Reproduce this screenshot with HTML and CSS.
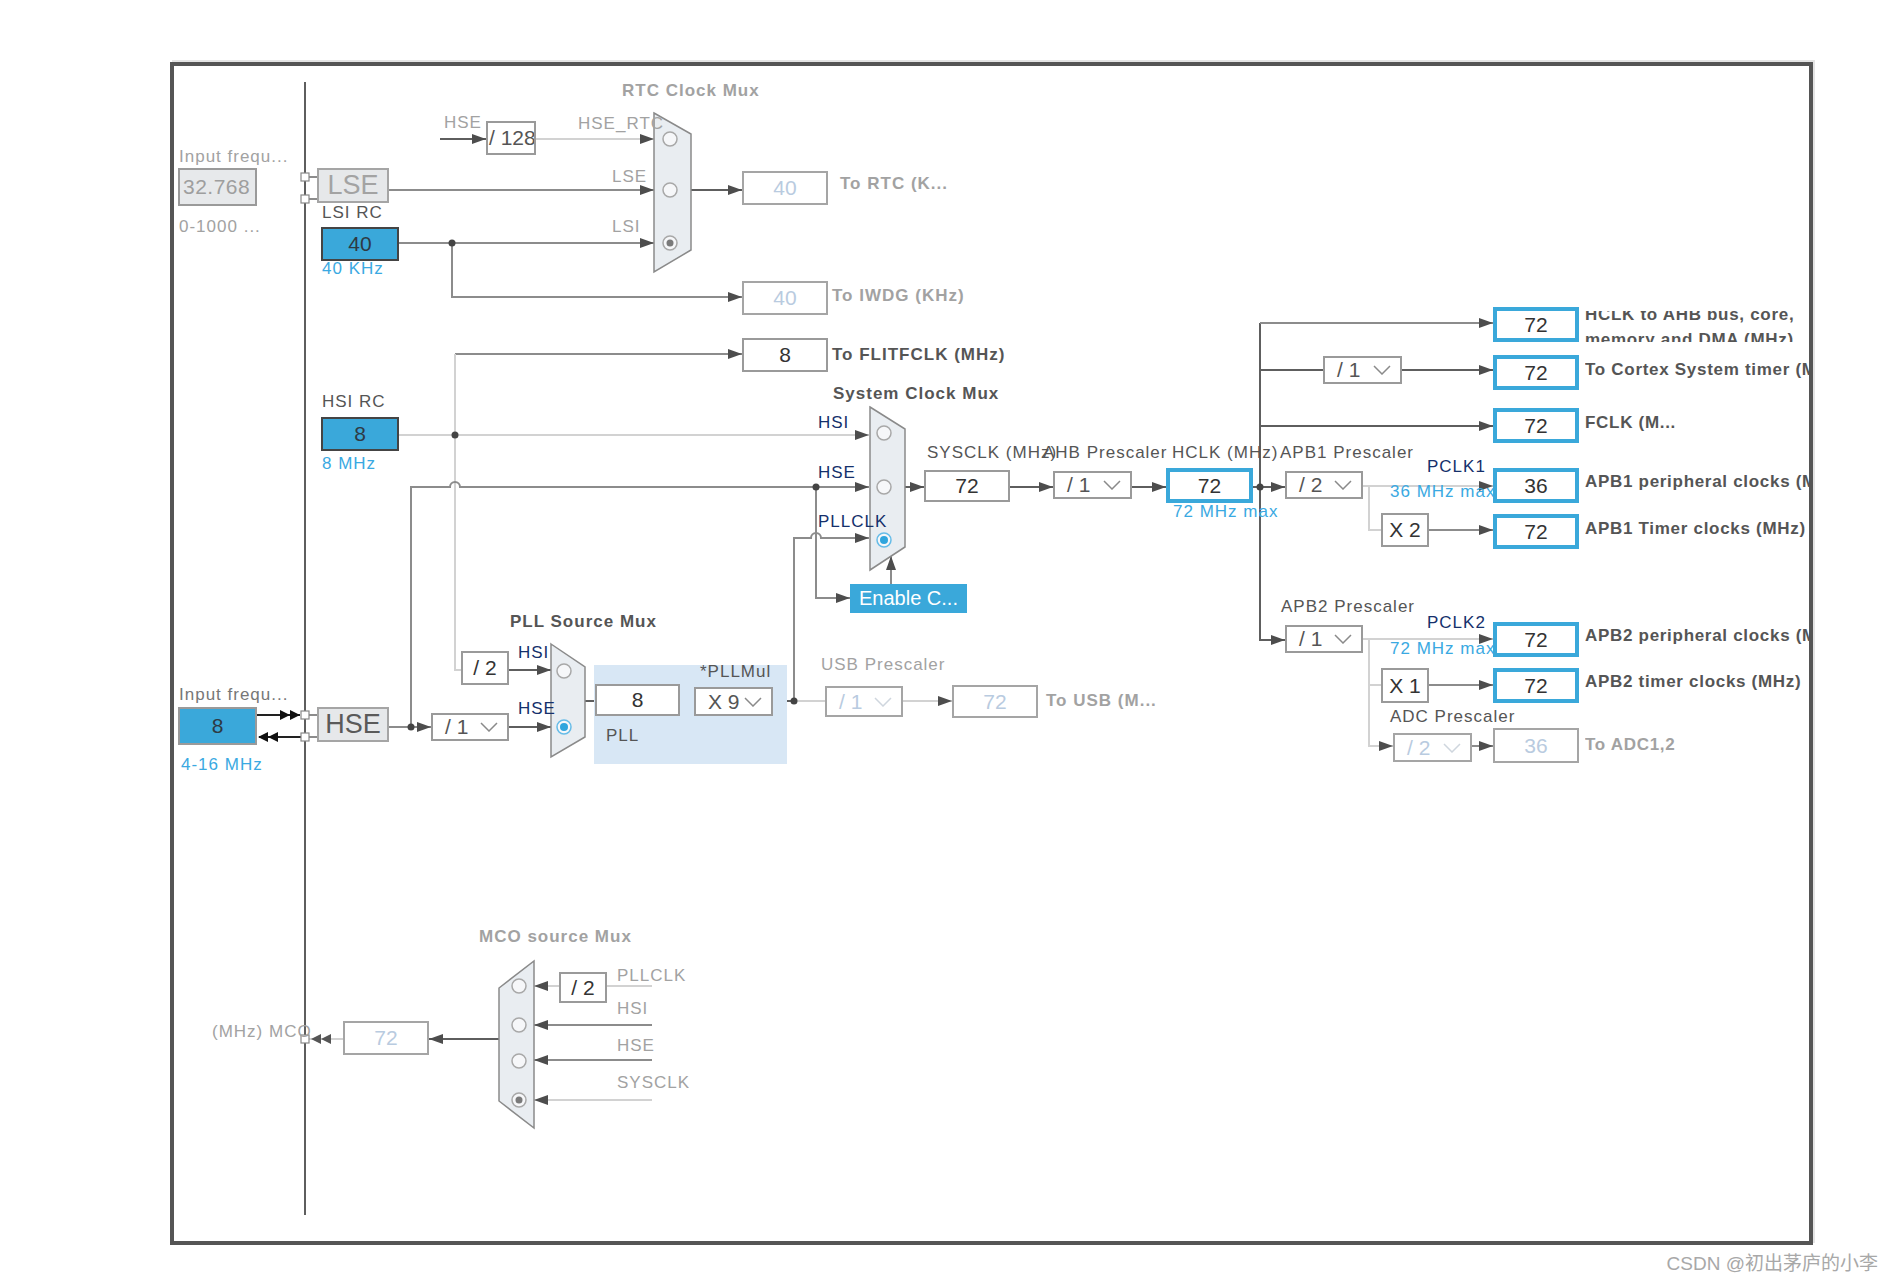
FILE: index.html
```html
<!DOCTYPE html>
<html>
<head>
<meta charset="utf-8">
<link rel="stylesheet" href="styles.css">
</head>
<body>
<div class="frame">
<svg class="wires" width="1643" height="1183" viewBox="170 62 1643 1183">
  <defs>
    <marker id="ar" viewBox="0 0 14 10" markerWidth="14" markerHeight="10" refX="14" refY="5" orient="auto" markerUnits="userSpaceOnUse">
      <path d="M0,0 L14,5 L0,10 z" fill="#4d4d4d"/>
    </marker>
  </defs>
  <!-- bus -->
  <path class="w wd" d="M305,82V1215"/>
  <!-- RTC area -->
  <path class="w wd" d="M440,139H486" marker-end="url(#ar)"/>
  <path class="w wl" d="M536,139H654" marker-end="url(#ar)"/>
  <path class="w wm" d="M389,190H654" marker-end="url(#ar)"/>
  <path class="w wm" d="M399,243H654" marker-end="url(#ar)"/>
  <path class="w wm" d="M452,243V297H742" marker-end="url(#ar)"/>
  <path class="w wd" d="M691,190H742" marker-end="url(#ar)"/>
  <!-- FLITF / HSI -->
  <path class="w wm" d="M455,354H742" marker-end="url(#ar)"/>
  <path class="w wl" d="M455,354V670H461"/>
  <path class="w wl" d="M399,435H869" marker-end="url(#ar)"/>
  <!-- HSE -->
  <path class="w wm" d="M389,727H431" marker-end="url(#ar)"/>
  <path class="w wm" d="M411,727V487H450A5,5 0 0 1 460,487H869" marker-end="url(#ar)"/>
  <path class="w wd" d="M509,670H551" marker-end="url(#ar)"/>
  <path class="w wd" d="M509,727H551" marker-end="url(#ar)"/>
  <!-- PLL -->
  <path class="w wd" d="M585,701H595"/>
  <path class="w wd" d="M680,701H694"/>
  <path class="w wd" d="M773,701H794"/>
  <path class="w wl" d="M794,701H825"/>
  <path class="w wm" d="M794,701V538H811A5,5 0 0 1 821,538H869" marker-end="url(#ar)"/>
  <path class="w wm" d="M816,487V598H850" marker-end="url(#ar)"/>
  <path class="w wm" d="M891,584V556" marker-end="url(#ar)"/>
  <path class="w wl" d="M903,701H952" marker-end="url(#ar)"/>
  <!-- SYSCLK / AHB -->
  <path class="w wd" d="M905,487H924" marker-end="url(#ar)"/>
  <path class="w wd" d="M1010,487H1053" marker-end="url(#ar)"/>
  <path class="w wd" d="M1132,487H1166" marker-end="url(#ar)"/>
  <path class="w wd" d="M1253,487H1285" marker-end="url(#ar)"/>
  <path class="w wd" d="M1260,323V640H1285" marker-end="url(#ar)"/>
  <path class="w wm" d="M1260,323H1493" marker-end="url(#ar)"/>
  <path class="w wd" d="M1260,370H1323"/>
  <path class="w wd" d="M1402,370H1493" marker-end="url(#ar)"/>
  <path class="w wd" d="M1260,426H1493" marker-end="url(#ar)"/>
  <!-- APB1 -->
  <path class="w wl" d="M1363,486H1493" marker-end="url(#ar)"/>
  <path class="w wl" d="M1369,486V530H1381"/>
  <path class="w wm" d="M1429,530H1493" marker-end="url(#ar)"/>
  <!-- APB2 -->
  <path class="w wl" d="M1363,639H1493" marker-end="url(#ar)"/>
  <path class="w wl" d="M1369,639V746H1393" marker-end="url(#ar)"/>
  <path class="w wl" d="M1369,685H1381"/>
  <path class="w wm" d="M1429,685H1493" marker-end="url(#ar)"/>
  <path class="w wm" d="M1472,746H1493" marker-end="url(#ar)"/>
  <!-- MCO -->
  <path class="w wl" d="M652,986H607"/>
  <path class="w wl" d="M559,986H534" marker-end="url(#ar)"/>
  <path class="w wm" d="M652,1025H534" marker-end="url(#ar)"/>
  <path class="w wm" d="M652,1060H534" marker-end="url(#ar)"/>
  <path class="w wl" d="M652,1100H534" marker-end="url(#ar)"/>
  <path class="w wd" d="M499,1039H429" marker-end="url(#ar)"/>
  <path class="w wl" d="M343,1039H309"/>
  <polygon class="head" points="311,1039 321,1034 321,1044"/>
  <polygon class="head" points="321,1039 331,1034 331,1044"/>
  <!-- HSE input arrows -->
  <path class="w wblack" d="M257,715H300"/>
  <polygon class="headk" points="280,710 290,715 280,720"/>
  <polygon class="headk" points="290,710 300,715 290,720"/>
  <path class="w wblack" d="M259,737H301"/>
  <polygon class="headk" points="258,737 268,732 268,742"/>
  <polygon class="headk" points="268,737 278,732 278,742"/>
  <!-- connectors -->
  <path class="w wm" d="M309,177H317M309,199H317M309,715H317M309,737H317"/>
  <rect class="con" x="301" y="173" width="8" height="8"/>
  <rect class="con" x="301" y="195" width="8" height="8"/>
  <rect class="con" x="301" y="711" width="8" height="8"/>
  <rect class="con" x="301" y="733" width="8" height="8"/>
  <rect class="con" x="301" y="1035" width="8" height="8"/>
  <!-- dots -->
  <circle class="dot" cx="452" cy="243" r="3.5"/>
  <circle class="dot" cx="455" cy="435" r="3.5"/>
  <circle class="dot" cx="411" cy="727" r="3.5"/>
  <circle class="dot" cx="816" cy="487" r="3.5"/>
  <circle class="dot" cx="794" cy="701" r="3.5"/>
  <circle class="dot" cx="1260" cy="487" r="3.5"/>
  <!-- muxes -->
  <polygon class="mux" points="654,113 691,134 691,250 654,272"/>
  <circle class="rad" cx="670" cy="139" r="7"/>
  <circle class="rad" cx="670" cy="190" r="7"/>
  <circle class="rad" cx="670" cy="243" r="7"/>
  <circle class="radg" cx="670" cy="243" r="3.5"/>

  <polygon class="mux" points="870,407 905,429 905,547 870,570"/>
  <circle class="rad" cx="884" cy="433" r="7"/>
  <circle class="rad" cx="884" cy="487" r="7"/>
  <circle class="rad radon" cx="884" cy="540" r="7"/>
  <circle class="radb" cx="884" cy="540" r="4"/>

  <polygon class="mux" points="551,644 585,667 585,737 551,757"/>
  <circle class="rad" cx="564" cy="671" r="7"/>
  <circle class="rad radon" cx="564" cy="727" r="7"/>
  <circle class="radb" cx="564" cy="727" r="4"/>

  <polygon class="mux" points="534,961 534,1128 499,1101 499,988"/>
  <circle class="rad" cx="519" cy="986" r="7"/>
  <circle class="rad" cx="519" cy="1025" r="7"/>
  <circle class="rad" cx="519" cy="1061" r="7"/>
  <circle class="rad" cx="519" cy="1100" r="7"/>
  <circle class="radg" cx="519" cy="1100" r="3.5"/>
</svg>

<div class="pll-bg"></div>

<!-- left column -->
<div class="lbl gray t-if1">Input frequ...</div>
<div class="box dis v-in32">32.768</div>
<div class="lbl gray t-rng">0-1000 ...</div>
<div class="box osc v-lse">LSE</div>
<div class="lbl t-lsirc">LSI RC</div>
<div class="box blue v-lsi">40</div>
<div class="lbl blu t-40k">40 KHz</div>
<div class="lbl t-hsirc">HSI RC</div>
<div class="box blue v-hsi">8</div>
<div class="lbl blu t-8m">8 MHz</div>
<div class="lbl mid t-if2">Input frequ...</div>
<div class="box blue in v-hsein">8</div>
<div class="lbl blu t-416">4-16 MHz</div>
<div class="box osc on v-hse">HSE</div>

<!-- RTC -->
<div class="lbl gray t-hse1">HSE</div>
<div class="box v-128 clip">/ 128</div>
<div class="lbl gray t-hsertc">HSE_RTC</div>
<div class="lbl gray t-lse">LSE</div>
<div class="lbl gray t-lsi">LSI</div>
<div class="lbl gray b t-rtcmux">RTC Clock Mux</div>
<div class="box pale v-rtc">40</div>
<div class="lbl gray b t-rtc">To RTC (K...</div>
<div class="box pale v-iwdg">40</div>
<div class="lbl gray b t-iwdg">To IWDG (KHz)</div>
<div class="box v-flit">8</div>
<div class="lbl b t-flit">To FLITFCLK (MHz)</div>

<!-- system mux -->
<div class="lbl b t-sysmux">System Clock Mux</div>
<div class="lbl navy t-shsi">HSI</div>
<div class="lbl navy t-shse">HSE</div>
<div class="lbl navy t-spll">PLLCLK</div>
<div class="box en v-en">Enable C...</div>

<!-- PLL -->
<div class="lbl b t-pllmux">PLL Source Mux</div>
<div class="lbl navy t-phsi">HSI</div>
<div class="lbl navy t-phse">HSE</div>
<div class="box v-d2">/ 2</div>
<div class="box sel v-pre"><span>/ 1</span><svg class="chev" width="18" height="10"><polyline points="1,1 9,9 17,1"/></svg></div>
<div class="lbl t-pllmul">*PLLMul</div>
<div class="box v-pll8">8</div>
<div class="box sel v-x9"><span>X 9</span><svg class="chev" width="18" height="10"><polyline points="1,1 9,9 17,1"/></svg></div>
<div class="lbl t-pll">PLL</div>
<div class="lbl gray t-usbp">USB Prescaler</div>
<div class="box sel pale v-usbp"><span>/ 1</span><svg class="chev" width="18" height="10"><polyline points="1,1 9,9 17,1"/></svg></div>
<div class="box pale v-usb">72</div>
<div class="lbl gray b t-usb">To USB (M...</div>

<!-- AHB / APB -->
<div class="lbl t-sysclk">SYSCLK (MHz)</div>
<div class="box v-sys">72</div>
<div class="lbl t-ahb">AHB Prescaler</div>
<div class="box sel v-ahb"><span>/ 1</span><svg class="chev" width="18" height="10"><polyline points="1,1 9,9 17,1"/></svg></div>
<div class="lbl t-hclk">HCLK (MHz)</div>
<div class="box out v-hclk">72</div>
<div class="lbl blu t-72max">72 MHz max</div>
<div class="lbl t-apb1">APB1 Prescaler</div>
<div class="box sel v-apb1"><span>/ 2</span><svg class="chev" width="18" height="10"><polyline points="1,1 9,9 17,1"/></svg></div>
<div class="lbl navy t-pclk1">PCLK1</div>
<div class="lbl blu t-36max">36 MHz max</div>
<div class="box v-x2">X 2</div>
<div class="box sel v-ctx"><span>/ 1</span><svg class="chev" width="18" height="10"><polyline points="1,1 9,9 17,1"/></svg></div>
<div class="lbl t-apb2">APB2 Prescaler</div>
<div class="box sel v-apb2"><span>/ 1</span><svg class="chev" width="18" height="10"><polyline points="1,1 9,9 17,1"/></svg></div>
<div class="lbl navy t-pclk2">PCLK2</div>
<div class="lbl blu t-72max2">72 MHz max</div>
<div class="box v-x1">X 1</div>
<div class="lbl t-adcp">ADC Prescaler</div>
<div class="box sel pale v-adcp"><span>/ 2</span><svg class="chev" width="18" height="10"><polyline points="1,1 9,9 17,1"/></svg></div>

<!-- outputs -->
<div class="box out o1">72</div>
<div class="rl rl-ahb"><span>HCLK to AHB bus, core,<br>memory and DMA (MHz)</span></div>
<div class="box out o2">72</div>
<div class="rl t-o2">To Cortex System timer (MHz)</div>
<div class="box out o3">72</div>
<div class="rl t-o3">FCLK (M...</div>
<div class="box out o4">36</div>
<div class="rl t-o4">APB1 peripheral clocks (MHz)</div>
<div class="box out o5">72</div>
<div class="rl t-o5">APB1 Timer clocks (MHz)</div>
<div class="box out o6">72</div>
<div class="rl t-o6">APB2 peripheral clocks (MHz)</div>
<div class="box out o7">72</div>
<div class="rl t-o7">APB2 timer clocks (MHz)</div>
<div class="box pale o8">36</div>
<div class="rl gray t-o8">To ADC1,2</div>

<!-- MCO -->
<div class="lbl gray b t-mcomux">MCO source Mux</div>
<div class="box v-mco2">/ 2</div>
<div class="lbl gray t-mpll">PLLCLK</div>
<div class="lbl gray t-mhsi">HSI</div>
<div class="lbl gray t-mhse">HSE</div>
<div class="lbl gray t-msys">SYSCLK</div>
<div class="box pale v-mco">72</div>
<div class="lbl gray t-mco">(MHz) MCO</div>
</div>
<div class="credit">CSDN @初出茅庐的小李</div>
</body>
</html>
```
FILE: styles.css
```css
* { box-sizing: border-box; }
body { margin: 0; background: #fff; font-family: "Liberation Sans", Arial, sans-serif; }

.frame {
  position: relative;
  margin: 62px 0 0 170px;
  width: 1643px;
  height: 1183px;
  box-shadow: inset 0 0 0 4px #555, 2px -2px 0 #e4e4e4;
}
.wires { position: absolute; left: 0; top: 0; }

.w { fill: none; stroke-width: 2; }
.wd { stroke: #5e5e5e; }
.wm { stroke: #8c8c8c; }
.wl { stroke: #d2d2d2; }
.wblack { stroke: #222; }
.head { fill: #555; }
.headk { fill: #111; }
.con { fill: #fff; stroke: #888; stroke-width: 1.2; }
.dot { fill: #444; }
.mux { fill: #e9edf1; stroke: #8a8a8a; stroke-width: 1.5; }
.rad { fill: #f6f7f9; stroke: #a8a8a8; stroke-width: 1.5; }
.radon { stroke: #66bce8; }
.radg { fill: #7a7a7a; }
.radb { fill: #2fa5dd; }

.pll-bg { position: absolute; left: 424px; top: 603px; width: 193px; height: 99px; background: #d8e7f5; }

.lbl {
  position: absolute;
  font-size: 17px;
  line-height: 20px;
  letter-spacing: 1px;
  white-space: nowrap;
  color: #555;
}
.b { font-weight: bold; }
.gray { color: #a2a2a2; }
.mid { color: #777; }
.navy { color: #15306b; }
.blu { color: #3aa9e2; }

.box {
  position: absolute;
  background: #fff;
  border: 2px solid #9a9a9a;
  font-size: 21px;
  color: #333;
  display: flex;
  align-items: center;
  justify-content: center;
  white-space: nowrap;
}
.box.pale { color: #b9cbe0; border-color: #a5a5a5; }
.box.out { border: 4px solid #3aa8da; }
.box.blue { background: #3aa8da; border-color: #444; color: #2e3a44; }
.box.blue.in { border-color: #9a9a9a; }
.box.dis { background: #e7e9eb; color: #9e9e9e; justify-content: flex-start; padding-left: 3px; letter-spacing: 0.5px; }
.box.osc { background: #e6e8ea; border-color: #a5a5a5; font-size: 27px; color: #a3a3a3; }
.box.osc.on { color: #5a5a5a; }
.box.clip { justify-content: flex-start; padding-left: 1px; overflow: hidden; color: #555; }
.box.en { background: #3aa8da; border: none; color: #fff; font-size: 20px; }
.box.sel { justify-content: space-between; padding: 0 9px 0 12px; color: #555; }
.box.sel.pale { color: #b9cbe0; }
.chev polyline { fill: none; stroke: #8a8a8a; stroke-width: 1.5; }
.pale .chev polyline { stroke: #cfd6de; }

/* left column */
.t-if1 { left: 9px; top: 85px; }
.v-in32 { left: 8px; top: 106px; width: 79px; height: 38px; }
.t-rng { left: 9px; top: 155px; }
.v-lse { left: 147px; top: 106px; width: 72px; height: 35px; }
.t-lsirc { left: 152px; top: 141px; }
.v-lsi { left: 151px; top: 165px; width: 78px; height: 34px; }
.t-40k { left: 152px; top: 197px; }
.t-hsirc { left: 152px; top: 330px; }
.v-hsi { left: 151px; top: 355px; width: 78px; height: 34px; }
.t-8m { left: 152px; top: 392px; }
.t-if2 { left: 9px; top: 623px; }
.v-hsein { left: 8px; top: 645px; width: 79px; height: 38px; }
.t-416 { left: 11px; top: 693px; }
.v-hse { left: 147px; top: 645px; width: 72px; height: 35px; }

/* RTC */
.t-hse1 { left: 274px; top: 51px; }
.v-128 { left: 316px; top: 59px; width: 50px; height: 34px; }
.t-hsertc { left: 408px; top: 52px; }
.t-lse { left: 442px; top: 105px; }
.t-lsi { left: 442px; top: 155px; }
.t-rtcmux { left: 452px; top: 19px; }
.v-rtc { left: 572px; top: 109px; width: 86px; height: 34px; }
.t-rtc { left: 670px; top: 112px; }
.v-iwdg { left: 572px; top: 219px; width: 86px; height: 34px; }
.t-iwdg { left: 662px; top: 224px; }
.v-flit { left: 572px; top: 276px; width: 86px; height: 34px; }
.t-flit { left: 662px; top: 283px; }

/* system mux */
.t-sysmux { left: 663px; top: 322px; }
.t-shsi { left: 648px; top: 351px; }
.t-shse { left: 648px; top: 401px; }
.t-spll { left: 648px; top: 450px; }
.v-en { left: 680px; top: 522px; width: 117px; height: 29px; }

/* PLL */
.t-pllmux { left: 340px; top: 550px; }
.t-phsi { left: 348px; top: 581px; }
.t-phse { left: 348px; top: 637px; }
.v-d2 { left: 291px; top: 589px; width: 48px; height: 34px; }
.v-pre { left: 261px; top: 651px; width: 78px; height: 28px; }
.t-pllmul { left: 530px; top: 600px; }
.v-pll8 { left: 425px; top: 622px; width: 85px; height: 32px; }
.v-x9 { left: 524px; top: 625px; width: 79px; height: 29px; }
.t-pll { left: 436px; top: 664px; }
.t-usbp { left: 651px; top: 593px; }
.v-usbp { left: 655px; top: 624px; width: 78px; height: 31px; }
.v-usb { left: 782px; top: 623px; width: 86px; height: 33px; }
.t-usb { left: 876px; top: 629px; }

/* AHB / APB */
.t-sysclk { left: 757px; top: 381px; }
.v-sys { left: 754px; top: 408px; width: 86px; height: 32px; }
.t-ahb { left: 873px; top: 381px; }
.v-ahb { left: 883px; top: 409px; width: 79px; height: 28px; }
.t-hclk { left: 1002px; top: 381px; }
.v-hclk { left: 996px; top: 406px; width: 87px; height: 35px; }
.t-72max { left: 1003px; top: 440px; }
.t-apb1 { left: 1110px; top: 381px; }
.v-apb1 { left: 1115px; top: 409px; width: 78px; height: 28px; }
.t-pclk1 { left: 1257px; top: 395px; }
.t-36max { left: 1220px; top: 420px; }
.v-x2 { left: 1211px; top: 451px; width: 48px; height: 34px; }
.v-ctx { left: 1153px; top: 294px; width: 79px; height: 28px; }
.t-apb2 { left: 1111px; top: 535px; }
.v-apb2 { left: 1115px; top: 563px; width: 78px; height: 28px; }
.t-pclk2 { left: 1257px; top: 551px; }
.t-72max2 { left: 1220px; top: 577px; }
.v-x1 { left: 1211px; top: 606px; width: 48px; height: 35px; }
.t-adcp { left: 1220px; top: 645px; }
.v-adcp { left: 1223px; top: 671px; width: 79px; height: 29px; }

/* outputs */
.o1, .o2, .o3, .o4, .o5, .o6, .o7, .o8 { left: 1323px; width: 86px; height: 35px; }
.o1 { top: 245px; }
.o2 { top: 293px; }
.o3 { top: 346px; }
.o4 { top: 406px; }
.o5 { top: 452px; }
.o6 { top: 560px; }
.o7 { top: 606px; }
.o8 { top: 666px; }

.rl {
  position: absolute;
  left: 1415px;
  width: 224px;
  height: 20px;
  overflow: hidden;
  white-space: nowrap;
  font-size: 17px;
  line-height: 20px;
  letter-spacing: 0.7px;
  font-weight: bold;
  color: #555;
}
.rl.gray { color: #a2a2a2; }
.rl-ahb { top: 249px; height: 31px; display: flex; align-items: center; line-height: 25px; }
.t-o2 { top: 298px; }
.t-o3 { top: 351px; }
.t-o4 { top: 410px; }
.t-o5 { top: 457px; }
.t-o6 { top: 564px; }
.t-o7 { top: 610px; }
.t-o8 { top: 673px; }

/* MCO */
.t-mcomux { left: 309px; top: 865px; }
.v-mco2 { left: 389px; top: 910px; width: 48px; height: 31px; }
.t-mpll { left: 447px; top: 904px; }
.t-mhsi { left: 447px; top: 937px; }
.t-mhse { left: 447px; top: 974px; }
.t-msys { left: 447px; top: 1011px; }
.v-mco { left: 173px; top: 959px; width: 86px; height: 34px; }
.t-mco { left: 42px; top: 960px; }

.credit {
  margin: 8px 15px 0 0;
  text-align: right;
  font-family: "Liberation Sans", "Noto Sans CJK SC", sans-serif;
  font-size: 19px;
  line-height: 22px;
  color: #a8a8a8;
}
```
